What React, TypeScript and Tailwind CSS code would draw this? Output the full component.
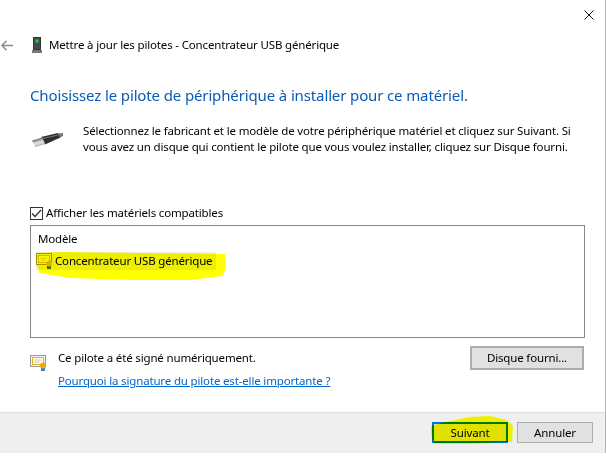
import React from 'react';

const DeviceIcon = () => (
  <svg className="block" width="10" height="16" viewBox="0 0 10 16">
    <rect x="1" y="0" width="8" height="13" fill="#333" />
    <rect x="0" y="13" width="10" height="3" fill="#777" />
    <rect x="2" y="1" width="6" height="11" fill="#4a4a4a" />
    <rect x="3.5" y="2.5" width="3" height="3" fill="#10d840" />
  </svg>
);

const UsbIcon = () => (
  <svg className="block" width="31" height="14" viewBox="0 0 31 14">
    <path d="M9 4 L26 0 L28.5 4.5 L13 11.5 Z" fill="#2e2e2e" />
    <path d="M11 5.5 L26 2" stroke="#777" strokeWidth="1" />
    <path d="M26 0.5 L31 0 L31 3 L28 4.5 Z" fill="#777" />
    <path d="M0 7.5 L10 4.5 L13 10.5 L3 13.5 Z" fill="#d8d8d8" />
    <path d="M0 7.5 L10 4.5 L11 6.5 L1 9.5 Z" fill="#8a8a8a" />
    <path d="M3 13.5 L13 10.5" stroke="#aaa" strokeWidth="1" />
  </svg>
);

const CertIcon = () => (
  <svg className="block" width="17" height="16" viewBox="0 0 17 16">
    <rect x="0.5" y="0.5" width="15" height="11" fill="#f4f4f4" stroke="#9a9a9a" />
    <rect x="2.5" y="2.5" width="11" height="7" fill="#fffbe8" stroke="#e2ad2a" />
    <path d="M4.5 5 H11.5 M4.5 7 H9.5" stroke="#cfc7a0" strokeWidth="1" />
    <rect x="11" y="12" width="4" height="4" fill="#2f7fd0" />
    <circle cx="13" cy="10.5" r="3" fill="#eeaa10" />
  </svg>
);

export default function App() {
  return (
    <div className="relative flex h-[456px] w-[606px] flex-col overflow-hidden bg-white font-['Noto_Sans',sans-serif] text-[11.5px] leading-[16px] tracking-[-0.16px] text-black">
      <div className="flex flex-1 flex-col border-r border-[#b5b5b5]">
        {/* Title bar */}
        <div className="flex h-[30px] justify-end pr-[11px] pt-[10px]">
          <svg width="10" height="10" viewBox="0 0 10 10">
            <path d="M0.5 0.5 L9.5 9.5 M9.5 0.5 L0.5 9.5" stroke="#111" strokeWidth="1" />
          </svg>
        </div>

        {/* Wizard header */}
        <div className="mt-[7px] flex h-[16px] items-center">
          <svg className="ml-[1px]" width="12" height="11" viewBox="0 0 12 11">
            <path d="M5.5 0.7 L0.9 5.5 L5.5 10.3 M1 5.5 H12" fill="none" stroke="#8a8a8a" strokeWidth="1.4" />
          </svg>
          <div className="ml-[19px]">
            <DeviceIcon />
          </div>
          <span className="ml-[7px]">Mettre à jour les pilotes - Concentrateur USB générique</span>
        </div>

        <div className="flex flex-1 flex-col pl-[30px] pr-[20px]">
          <h1 className="mt-[31px] text-[15px] leading-[22px] tracking-[-0.13px] text-[#0a5bb5]">
            Choisissez le pilote de périphérique à installer pour ce matériel.
          </h1>

          <div className="mt-[17px] flex">
            <div className="ml-[2px] mt-[10px] w-[51px] shrink-0">
              <UsbIcon />
            </div>
            <p className="w-[510px]">
              Sélectionnez le fabricant et le modèle de votre périphérique matériel et cliquez sur Suivant. Si vous avez un disque qui contient le pilote que vous voulez installer, cliquez sur Disque fourni.
            </p>
          </div>

          <label className="mt-[51px] flex h-[14px] items-center">
            <span className="flex h-[13px] w-[13px] items-center justify-center border border-[#333] bg-white">
              <svg width="11" height="9" viewBox="0 0 11 9">
                <path d="M1 4.5 L4 7.5 L10 1" fill="none" stroke="#333" strokeWidth="1.3" />
              </svg>
            </span>
            <span className="ml-[3px]">Afficher les matériels compatibles</span>
          </label>

          {/* Model list */}
          <div className="mt-[5px] h-[113px] w-[555px] border border-[#82878f] bg-white">
            <div className="mt-[5px] pl-[7px]">Modèle</div>
            <div className="ml-[5px] mt-[5px] flex h-[18px] w-[180px] items-center whitespace-nowrap bg-[#eeeeee]">
              <CertIcon />
              <span className="ml-[2px]">Concentrateur USB générique</span>
            </div>
          </div>

          {/* Signature row */}
          <div className="mt-[8px] flex w-[554px] justify-between">
            <div className="flex">
              <div className="mt-[9px] w-[28px] shrink-0">
                <CertIcon />
              </div>
              <div className="mt-[4px] flex flex-col">
                <span>Ce pilote a été signé numériquement.</span>
                <a className="mt-[7px] text-[#0066cc] underline">Pourquoi la signature du pilote est-elle importante ?</a>
              </div>
            </div>
            <button className="h-[24px] w-[114px] border-2 border-[#adadad] bg-[#e1e1e1]">Disque fourni...</button>
          </div>
        </div>

        {/* Footer */}
        <div className="flex h-[41px] justify-end gap-[9px] border-t border-[#dfdfdf] bg-[#efefef] pr-[12px] pt-[9px]">
          <button className="h-[21px] w-[76px] border-2 border-[#0078d7] bg-[#e1e1e1]">Suivant</button>
          <button className="h-[21px] w-[76px] border border-[#adadad] bg-[#e1e1e1]">Annuler</button>
        </div>
      </div>

      {/* Sliver of the page behind the dialog */}
      <div className="h-[3px] overflow-hidden pl-[15px] text-[11px] leading-[13px] text-[#222]">
        Interface audio-vidéo (ABC)
      </div>

      {/* Yellow marker strokes */}
      <svg className="pointer-events-none absolute left-0 top-0 mix-blend-multiply" width="606" height="456" viewBox="0 0 606 456">
        <path d="M36 253 L60 252 L225 254 L226 267 L223 276 L190 280 L130 280 L70 278 L40 273 L36 264 Z" fill="#ffff00" />
        <path d="M431 426 L445 422 L470 417 L490 416 L506 420 L513 426 L512 442 L500 442 L470 444 L435 444 L431 436 Z" fill="#ffff00" />
      </svg>
    </div>
  );
}
